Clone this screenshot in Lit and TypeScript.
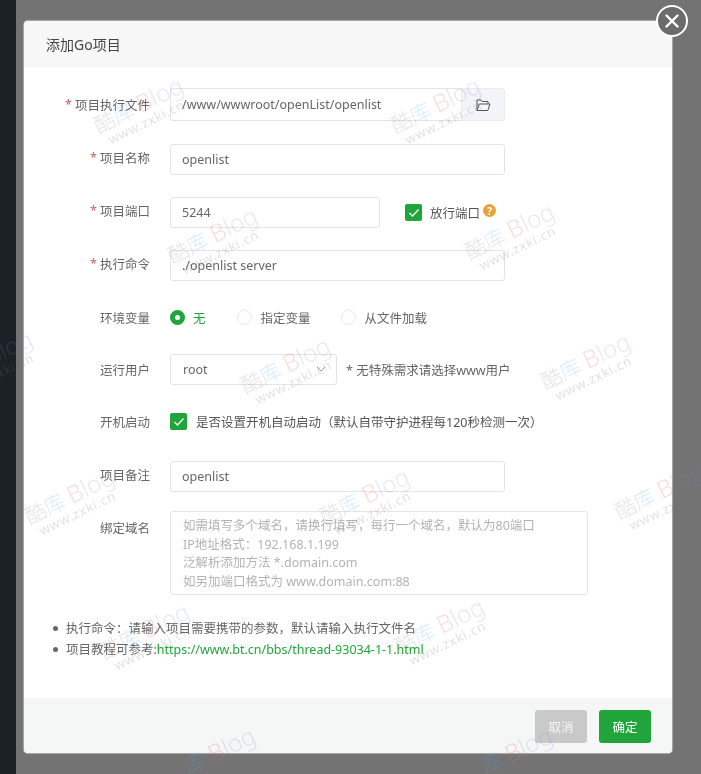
import { LitElement, html, css } from "lit";
import { customElement } from "lit/decorators.js";

const MARKS: [number, number][] = [
  [141, 111], [438, 111], [215, 241], [512, 237], [368, -15], [-10, 364], [288, 371], [588, 367],
  [72, 502], [367, 502], [662, 497], [147, 637], [442, 632], [737, 627], [213, 761], [510, 761],
];

@customElement("app-root")
export class AppRoot extends LitElement {
  static styles = css`
    :host { display: block; width: 701px; height: 774px; }
    * { box-sizing: border-box; }
    .page {
      position: relative; width: 701px; height: 774px; overflow: hidden; display: flex;
      background: #737373; filter: blur(0.45px); text-spacing-trim: space-all;
      font-family: "Noto Sans", "Noto Sans CJK SC", sans-serif; font-size: 12.5px; color: #666;
    }
    .side { width: 16px; background: #1c2126; flex: none; }
    .wrap { flex: 1; padding: 21px 29px 21px 8px; }
    .dialog {
      position: relative; height: 732px; background: #fff; border-radius: 4px; display: flex; flex-direction: column;
      box-shadow: 0 0 1px 1px rgba(255, 255, 255, .4);
    }
    .head {
      height: 46px; flex: none; background: #f7f7f7; border-radius: 4px 4px 0 0; padding: 0 22px;
      display: flex; align-items: center; font-size: 14px; color: #444;
    }
    .close {
      position: absolute; top: -16px; right: -16px; width: 32px; height: 32px; border-radius: 50%;
      background: #6b6b6b; border: 2px solid #fff; display: flex; align-items: center; justify-content: center;
    }
    .body { flex: 1; padding-top: 21px; }
    .row { display: grid; grid-template-columns: 126px 1fr; column-gap: 20px; height: 31px; margin-bottom: 22px; }
    .row.tall { height: 33px; margin-bottom: 23px; }
    .row.m21 { margin-bottom: 21px; }
    .row.m24 { margin-bottom: 24px; }
    .row.m19 { margin-bottom: 19px; }
    .row.area { height: 84px; margin-bottom: 0; }
    .label { display: flex; justify-content: flex-end; align-items: center; color: #666; white-space: nowrap; }
    .label.up { padding-bottom: 4px; }
    .area .label { align-items: flex-start; padding-top: 7px; }
    .req { color: #c9605c; margin-right: 3px; }
    .ctl { display: flex; align-items: center; min-width: 0; }
    .input {
      height: 100%; border: 1px solid #e4e4e4; border-radius: 3px; padding: 0 11px; display: flex; align-items: center;
      background: #fff; color: #666; white-space: nowrap;
    }
    .w335 { width: 335px; } .w210 { width: 210px; }
    .w167 { width: 167px; position: relative; padding-left: 12px; }
    .group { display: flex; width: 335px; height: 100%; }
    .group .input { flex: 1; border-radius: 3px 0 0 3px; border-right: 0; }
    .pick {
      width: 44px; background: #f2f4f8; border: 1px solid #e8ebf0; border-radius: 0 3px 3px 0;
      display: flex; align-items: center; justify-content: center;
    }
    .chev { position: absolute; right: 10px; top: 11px; }
    .check {
      width: 17px; height: 17px; background: #20a53a; border-radius: 2px; flex: none;
      display: flex; align-items: center; justify-content: center;
    }
    .open { margin-left: 25px; display: flex; align-items: center; color: #555; }
    .open span { margin-left: 8px; }
    .q {
      width: 13px; height: 13px; border-radius: 50%; background: #e6a23c; color: #fff; font-size: 10px; font-weight: 700;
      display: flex; align-items: center; justify-content: center; margin: -4px 0 0 3px;
    }
    .radio { display: flex; align-items: center; margin-right: 30px; color: #666; }
    .dot { width: 15px; height: 15px; border-radius: 50%; border: 1px solid #e8e8e8; margin-right: 9px; }
    .dot.on { border: 5px solid #20a53a; background: #fff; margin-right: 8px; }
    .radio.on { color: #20a53a; margin-right: 31px; }
    .hint { margin-left: 9px; color: #666; white-space: nowrap; }
    .checktext { margin-left: 9px; color: #555; white-space: nowrap; }
    .ta {
      width: 418px; height: 84px; border: 1px solid #e4e4e4; border-radius: 3px; padding: 5px 11px 0 12px; color: #b3b3b3;
      line-height: 18.7px; white-space: nowrap;
    }
    ul { margin: 23px 0 0; padding: 0 0 0 42px; list-style: none; color: #666; line-height: 21px; }
    li { position: relative; white-space: nowrap; }
    li::before {
      content: ""; position: absolute; left: -13px; top: 8px; width: 5px; height: 5px; border-radius: 50%; background: #666;
    }
    a { color: #20a53a; text-decoration: none; }
    .foot {
      height: 55px; flex: none; background: #f5f6f6; border-radius: 0 0 4px 4px; padding: 12px 21px 0 0;
      display: flex; justify-content: flex-end; gap: 12px;
    }
    .btn {
      width: 52px; height: 33px; border-radius: 3px; display: flex; align-items: center; justify-content: center;
      color: #fff; background: #20a53a;
    }
    .btn.off { background: #c9c9c9; color: #f4f4f4; }
    .mark {
      position: absolute; width: 130px; transform: translate(-50%, -50%) rotate(-26deg); text-align: center;
      white-space: nowrap; pointer-events: none; line-height: 1;
    }
    .t1 { font-size: 21px; display: block; font-weight: 300; }
    .t1 i { font-style: normal; }
    .t1 .c, .t1 .d { font-size: 24px; }
    .a { color: rgba(120, 120, 120, .2); } .b { color: rgba(90, 170, 235, .24); }
    .c { color: rgba(235, 110, 110, .24); } .d { color: rgba(120, 130, 210, .18); }
    .t2 { font-size: 13px; letter-spacing: .8px; display: block; margin-top: 1px; color: rgba(120, 120, 120, .22); }
  `;

  render() {
    const req = html`<span class="req">*</span>`;
    return html`<div class="page">
      <div class="side"></div>
      <div class="wrap">
        <div class="dialog">
          <div class="head">添加Go项目</div>
          <div class="close">
            <svg width="16" height="16" viewBox="0 0 16 16"><path d="M2.5 2.5l11 11M13.5 2.5l-11 11" stroke="#fff" stroke-width="2.4" stroke-linecap="round"/></svg>
          </div>
          <div class="body">
            <div class="row tall">
              <div class="label">${req}项目执行文件</div>
              <div class="ctl"><div class="group">
                <div class="input">/www/wwwroot/openList/openlist</div>
                <div class="pick">
                  <svg width="15" height="14" viewBox="0 0 15 14" fill="none" stroke="#555" stroke-width="1"><path d="M1 12.5V2h4l1.2 1.5H12V6M1 12.5h10.8L14 6H3.2L1 12.5z"/></svg>
                </div>
              </div></div>
            </div>
            <div class="row"><div class="label up">${req}项目名称</div><div class="ctl"><div class="input w335">openlist</div></div></div>
            <div class="row">
              <div class="label up">${req}项目端口</div>
              <div class="ctl">
                <div class="input w210">5244</div>
                <div class="open"><div class="check">
                  <svg width="12" height="10" viewBox="0 0 12 10" fill="none" stroke="#fff" stroke-width="1.3"><path d="M1.5 5l3 3 6-6.5"/></svg>
                </div><span>放行端口</span><div class="q">?</div></div>
              </div>
            </div>
            <div class="row m21"><div class="label up">${req}执行命令</div><div class="ctl"><div class="input w335">./openlist server</div></div></div>
            <div class="row m21">
              <div class="label">环境变量</div>
              <div class="ctl">
                <div class="radio on"><div class="dot on"></div>无</div>
                <div class="radio"><div class="dot"></div>指定变量</div>
                <div class="radio"><div class="dot"></div>从文件加载</div>
              </div>
            </div>
            <div class="row m21">
              <div class="label">运行用户</div>
              <div class="ctl">
                <div class="input w167">root
                  <svg class="chev" width="10" height="7" viewBox="0 0 10 7" fill="none" stroke="#999" stroke-width="1"><path d="M1 1l4 4 4-4"/></svg>
                </div>
                <div class="hint">* 无特殊需求请选择www用户</div>
              </div>
            </div>
            <div class="row m24">
              <div class="label">开机启动</div>
              <div class="ctl"><div class="check">
                <svg width="12" height="10" viewBox="0 0 12 10" fill="none" stroke="#fff" stroke-width="1.3"><path d="M1.5 5l3 3 6-6.5"/></svg>
              </div><div class="checktext">是否设置开机自动启动（默认自带守护进程每120秒检测一次）</div></div>
            </div>
            <div class="row m19"><div class="label up">项目备注</div><div class="ctl"><div class="input w335">openlist</div></div></div>
            <div class="row area">
              <div class="label">绑定域名</div>
              <div class="ta">如需填写多个域名，请换行填写，每行一个域名，默认为80端口<br>IP地址格式：192.168.1.199<br>泛解析添加方法 *.domain.com<br>如另加端口格式为 www.domain.com:88</div>
            </div>
            <ul>
              <li>执行命令：请输入项目需要携带的参数，默认请输入执行文件名</li>
              <li>项目教程可参考:<a>https://www.bt.cn/bbs/thread-93034-1-1.html</a></li>
            </ul>
          </div>
          <div class="foot"><div class="btn off">取消</div><div class="btn">确定</div></div>
        </div>
      </div>
      ${MARKS.map(([x, y]) => html`<div class="mark" style="left:${x}px;top:${y}px">
        <span class="t1"><i class="a">酷</i><i class="b">库</i> <i class="c">B</i><i class="d">log</i></span>
        <span class="t2">www.zxki.cn</span>
      </div>`)}
    </div>`;
  }
}
